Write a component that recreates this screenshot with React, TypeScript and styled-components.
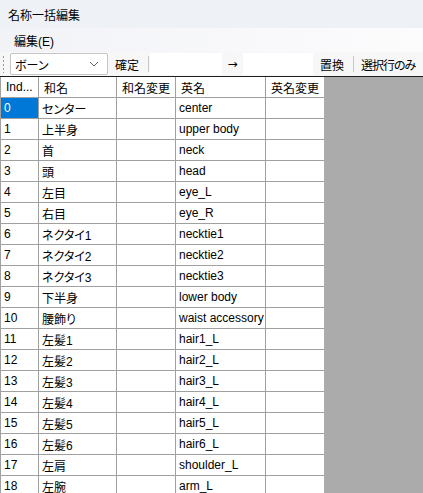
import React from "react";
import styled, { createGlobalStyle } from "styled-components";

const GlobalStyle = createGlobalStyle`
  html, body {
    margin: 0;
    padding: 0;
    background: #ffffff;
  }
  * {
    box-sizing: border-box;
  }
`;

interface IRow {
  index: number;
  jp: string;
  en: string;
}

const rows: IRow[] = [
  { index: 0, jp: "センター", en: "center" },
  { index: 1, jp: "上半身", en: "upper body" },
  { index: 2, jp: "首", en: "neck" },
  { index: 3, jp: "頭", en: "head" },
  { index: 4, jp: "左目", en: "eye_L" },
  { index: 5, jp: "右目", en: "eye_R" },
  { index: 6, jp: "ネクタイ1", en: "necktie1" },
  { index: 7, jp: "ネクタイ2", en: "necktie2" },
  { index: 8, jp: "ネクタイ3", en: "necktie3" },
  { index: 9, jp: "下半身", en: "lower body" },
  { index: 10, jp: "腰飾り", en: "waist accessory" },
  { index: 11, jp: "左髪1", en: "hair1_L" },
  { index: 12, jp: "左髪2", en: "hair2_L" },
  { index: 13, jp: "左髪3", en: "hair3_L" },
  { index: 14, jp: "左髪4", en: "hair4_L" },
  { index: 15, jp: "左髪5", en: "hair5_L" },
  { index: 16, jp: "左髪6", en: "hair6_L" },
  { index: 17, jp: "左肩", en: "shoulder_L" },
  { index: 18, jp: "左腕", en: "arm_L" },
];

const headers = ["Ind...", "和名", "和名変更", "英名", "英名変更"];

export default function App() {
  return (
    <>
      <GlobalStyle />
      <Window>
        <TitleBar>名称一括編集</TitleBar>
        <MenuBar>
          <MenuItem>編集(E)</MenuItem>
        </MenuBar>
        <ToolBar>
          <Grip />
          <Combo>
            <span>ボーン</span>
            <svg width="10" height="6" viewBox="0 0 10 6">
              <path d="M1 1 L5 5 L9 1" fill="none" stroke="#606060" strokeWidth="1" />
            </svg>
          </Combo>
          <ToolButton>確定</ToolButton>
          <Separator />
          <Field $width={72} />
          <Arrow>→</Arrow>
          <Field $width={70} />
          <ToolButton>置換</ToolButton>
          <Separator />
          <ToolButton $tight>選択行のみ</ToolButton>
        </ToolBar>
        <GridArea>
          <Table>
            {headers.map((h) => (
              <HeaderCell key={h}>{h}</HeaderCell>
            ))}
            {rows.map((r) => (
              <React.Fragment key={r.index}>
                <Cell $selected={r.index === 0}>{r.index}</Cell>
                <Cell>{r.jp}</Cell>
                <Cell />
                <Cell>{r.en}</Cell>
                <Cell />
              </React.Fragment>
            ))}
          </Table>
          <Empty />
        </GridArea>
      </Window>
    </>
  );
}

const Window = styled.div`
  width: 423px;
  height: 493px;
  overflow: hidden;
  display: flex;
  flex-direction: column;
  font-family: "Liberation Sans", "Noto Sans CJK JP", sans-serif;
  font-size: 12px;
  font-feature-settings: "palt";
  color: #000;
  background: #ffffff;
`;

const TitleBar = styled.div`
  height: 28px;
  flex: none;
  display: flex;
  align-items: center;
  padding-left: 8px;
  background: #eef1f6;
`;

const MenuBar = styled.div`
  height: 24px;
  flex: none;
  display: flex;
  align-items: center;
  padding-left: 8px;
  background: linear-gradient(to right, #f2f3f7, #fcfcfd);
`;

const MenuItem = styled.span`
  padding: 0 6px;
`;

const ToolBar = styled.div`
  height: 24px;
  flex: none;
  display: flex;
  align-items: center;
  overflow: hidden;
  background: #f7f7f7;

  & > * {
    flex: none;
  }
`;

const Grip = styled.div`
  width: 3px;
  height: 18px;
  margin: 0 5px 0 2px;
  background-image: radial-gradient(circle, #9a9a9a 0.8px, transparent 1px);
  background-size: 3px 4px;
  background-repeat: repeat-y;
`;

const Combo = styled.div`
  width: 98px;
  height: 22px;
  display: flex;
  align-items: center;
  justify-content: space-between;
  padding: 0 8px 0 4px;
  border: 1px solid #c6c6c6;
  border-radius: 2px;
  background: #ffffff;
`;

const ToolButton = styled.div<{ $tight?: boolean }>`
  height: 22px;
  display: flex;
  align-items: center;
  padding: 0 7px 0 ${(p) => (p.$tight ? 6 : 7)}px;
  letter-spacing: ${(p) => (p.$tight ? "-1px" : "0")};
  white-space: nowrap;
`;

const Separator = styled.div`
  width: 1px;
  height: 16px;
  margin: 0 1px 0 2px;
  background: #c8c8c8;
`;

const Field = styled.div<{ $width: number }>`
  width: ${(p) => p.$width}px;
  height: 22px;
  background: #ffffff;
`;

const Arrow = styled.div`
  width: 21px;
  height: 22px;
  display: flex;
  align-items: center;
  justify-content: center;
  font-family: "DejaVu Sans", sans-serif;
  font-size: 12px;
`;

const GridArea = styled.div`
  flex: 1;
  display: flex;
  border-top: 1px solid #1e1e1e;
  min-height: 0;
`;

const Table = styled.div`
  width: 324px;
  flex: none;
  display: grid;
  grid-template-columns: 38px 78px 59px 90px 59px;
  grid-auto-rows: 21px;
  align-content: start;
  border-left: 1px solid #a0a0a0;
  background: #ffffff;
`;

const HeaderCell = styled.div`
  display: flex;
  align-items: center;
  padding-left: 5px;
  border-right: 1px solid #a0a0a0;
  border-bottom: 1px solid #a0a0a0;
  white-space: nowrap;
  overflow: hidden;
`;

const Cell = styled.div<{ $selected?: boolean }>`
  display: flex;
  align-items: center;
  padding-left: 3px;
  border-right: 1px solid #a0a0a0;
  border-bottom: 1px solid #a0a0a0;
  white-space: nowrap;
  overflow: hidden;
  background: ${(p) => (p.$selected ? "#0078d7" : "#ffffff")};
  color: ${(p) => (p.$selected ? "#ffffff" : "#000000")};
`;

const Empty = styled.div`
  flex: 1;
  background: #ababab;
`;
